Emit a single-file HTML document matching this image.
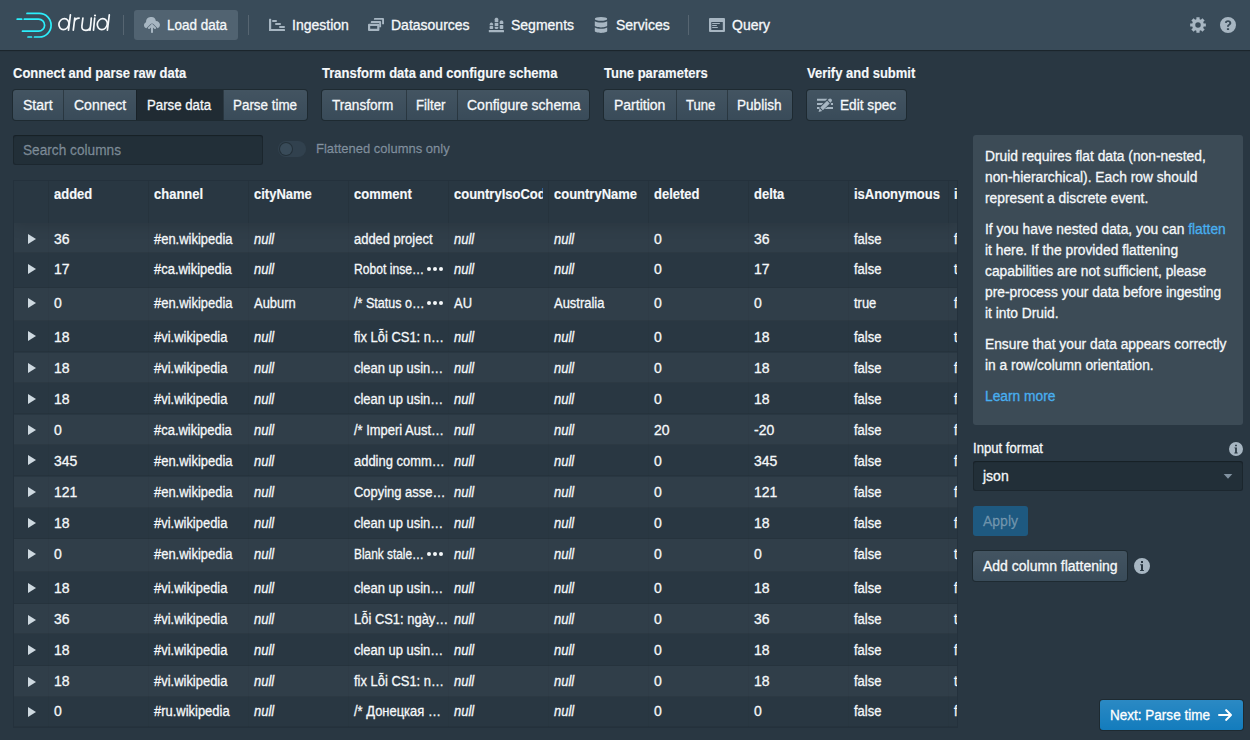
<!DOCTYPE html>
<html><head><meta charset="utf-8">
<style>
*{box-sizing:border-box;margin:0;padding:0}
html,body{width:1250px;height:740px;overflow:hidden}
body{background:#293742;font-family:"Liberation Sans",sans-serif;font-size:14px;line-height:18px;color:#f5f8fa;position:relative;-webkit-text-stroke:0.3px currentColor}
.abs{position:absolute}
.nav{position:absolute;left:0;top:0;width:1250px;height:50px;background:#394b59;box-shadow:0 0 0 1px rgba(16,22,26,.2),0 1px 1px rgba(16,22,26,.4);z-index:2}
.div{position:absolute;top:15px;width:1px;height:20px;background:rgba(255,255,255,.15)}
.ntxt{position:absolute;top:16px;white-space:nowrap}
.ico{position:absolute;top:17px;width:16px;height:16px}
.ico svg{display:block}
.title{position:absolute;top:64px;font-weight:bold;font-size:14px;white-space:nowrap;transform:scaleX(.928);transform-origin:0 0;-webkit-text-stroke:0.15px currentColor}
.bg{position:absolute;top:90px;height:30px;border-radius:3px;box-shadow:0 0 0 1px rgba(16,22,26,.4);overflow:hidden;background:#394b59;background-image:linear-gradient(to bottom,rgba(255,255,255,.05),rgba(255,255,255,0))}
.btn{position:absolute;top:0;height:30px}
.btn+.btn{border-left:1px solid rgba(16,22,26,.4)}
.btn.active{background:#202b33}
.btxt{position:absolute;top:96px;white-space:nowrap}
.search{position:absolute;left:13px;top:135px;width:250px;height:30px;border-radius:3px;background:rgba(16,22,26,.25);box-shadow:inset 0 0 0 1px rgba(16,22,26,.3),inset 0 1px 1px rgba(16,22,26,.4)}
.ph{position:absolute;left:23px;top:141px;color:rgba(167,182,194,.6)}
.table{position:absolute;left:13px;top:180px;width:945px;height:548px;border:1px solid rgba(16,22,26,.15);overflow:hidden}
.thead{position:absolute;left:0;top:0;width:100%;height:42px;background:#293742;box-shadow:0 2px 15px 0 rgba(0,0,0,.15);z-index:1}
.th{position:absolute;top:0;width:100px;height:42px;border-left:1px solid rgba(16,22,26,.12);padding:4px 5px;font-weight:bold;font-size:14px;overflow:hidden;white-space:nowrap;-webkit-text-stroke:0.15px currentColor}
.thc{width:89px;overflow:hidden}
.th span{display:inline-block;transform:scaleX(.928);transform-origin:0 0}
.th.exp{left:0;width:34px;border-left:none}
.tr{position:absolute;left:0;width:100%;box-shadow:inset 0 -1px 0 rgba(0,0,0,.07)}
.tr.odd{background:rgba(138,155,168,.08)}
.td{position:absolute;top:0;width:100px;border-left:1px solid rgba(16,22,26,.035);padding:6.7px 5px 0 5px;overflow:hidden;white-space:nowrap}
.td.exp{left:0;width:34px;border-left:none}
.nul{font-style:italic}
.s{display:inline-block;transform-origin:0 0}
.tri{position:absolute;left:14px;top:10.5px;width:0;height:0;border-left:8px solid #ced9e0;border-top:5px solid transparent;border-bottom:5px solid transparent}
.clip{display:inline-block;max-width:72px;overflow:hidden;vertical-align:top}
.more{position:absolute;left:77.5px;top:13.5px;width:18px;height:6px}
.more i{position:absolute;top:0;width:4.3px;height:4.3px;border-radius:50%;background:#f5f8fa}
.more i:nth-child(1){left:0}.more i:nth-child(2){left:6px}.more i:nth-child(3){left:12px}
.callout{position:absolute;left:973px;top:135px;width:270px;height:290px;border-radius:3px;background:rgba(138,155,168,.2)}
.ctxt{position:absolute;left:985px;margin-top:1px;line-height:21px;white-space:nowrap;transform:scaleX(.985);transform-origin:0 0}
a{color:#48aff0;text-decoration:none}
.label{position:absolute;left:973px;top:439px}
.select{position:absolute;left:973px;top:461px;width:270px;height:30px;border-radius:3px;background:rgba(16,22,26,.25);box-shadow:inset 0 0 0 1px rgba(16,22,26,.3),inset 0 1px 1px rgba(16,22,26,.4)}
.pbtn{position:absolute;border-radius:3px}
</style></head><body>
<div class="nav">
  <svg class="abs" style="left:0;top:0" width="120" height="50" viewBox="0 0 120 50">
    <g fill="none" stroke="#2ceefb" stroke-width="1.7" stroke-linecap="round">
      <path d="M27 13.4H39.3A11.8 11.8 0 0 1 39.3 37H34.5"/>
      <path d="M28 37H31.5"/>
      <path d="M24.3 19.2H38.6A6 6 0 0 1 38.6 31.2H22.5"/>
      <path d="M17.2 19.2H21.7"/>
    </g>
    <g fill="none" stroke="#f5f8fa" stroke-width="1.7" stroke-linecap="round" transform="translate(-0.5 -0.4)">
      <ellipse cx="64.4" cy="24.5" rx="5" ry="5.5" transform="translate(64.4 24.5) skewX(-5) translate(-64.4 -24.5)"/>
      <path d="M70.9 15.3L69 30.6"/>
      <path d="M75.3 18.4L73.8 30.6M74.9 22Q75.8 18.5 79.6 18.5"/>
      <path d="M83.4 18.4L82.4 26.3Q81.9 30.8 86.2 30.8Q90.6 30.8 91.1 26.3L91.8 18.4M91.2 25L90.5 30.6"/>
      <path d="M95.2 18.4L94 30.6"/>
      <ellipse cx="102.8" cy="24.5" rx="5" ry="5.5" transform="translate(102.8 24.5) skewX(-5) translate(-102.8 -24.5)"/>
      <path d="M109.8 15.3L107.9 30.6"/>
    </g>
    <circle cx="95" cy="15.5" r="1.1" fill="#f5f8fa"/>
  </svg>
  <div class="div" style="left:123px"></div>
  <div class="abs" style="left:134px;top:10px;width:104px;height:30px;border-radius:3px;background:rgba(138,155,168,.3)"></div>
  <div class="ico" style="left:144px"><svg width="16" height="16" viewBox="0 0 16 16" fill="#a7b6c2"><path d="M8.71 7.29C8.53 7.11 8.28 7 8 7s-.53.11-.71.29l-3 3a1.003 1.003 0 001.42 1.42L7 10.41V15c0 .55.45 1 1 1s1-.45 1-1v-4.59l1.29 1.29c.18.19.43.3.71.3a1.003 1.003 0 00.71-1.71l-3-3zM12 4c-.03 0-.07 0-.1.01A5 5 0 002 5c0 .11.01.22.02.34C.84 5.89 0 7.03 0 8.36 0 9.8.97 11 2.28 11.37c.03-.04.06-.08.1-.11l4.2-4.18c.35-.35.86-.57 1.42-.57s1.07.22 1.42.58l4.2 4.18.1.1A4.008 4.008 0 0016 8c0-2.21-1.79-4-4-4z"/></svg></div>
  <div class="ntxt" style="left:167px;transform:scaleX(0.963);transform-origin:0 0">Load data</div>
  <div class="div" style="left:248px"></div>
  <div class="ico" style="left:269px"><svg width="16" height="16" viewBox="0 0 16 16" fill="#a7b6c2"><rect x="0" y="1.8" width="2.2" height="12.2" rx=".6"/><rect x="0" y="12" width="16" height="2.1" rx=".6"/><rect x="3" y="3" width="5" height="2" rx="1"/><rect x="6" y="6" width="6" height="2" rx="1"/><rect x="10" y="9" width="6" height="2.1" rx="1"/></svg></div>
  <div class="ntxt" style="left:292px">Ingestion</div>
  <div class="ico" style="left:368px"><svg width="16" height="16" viewBox="0 0 16 16" fill="#a7b6c2"><path fill-rule="evenodd" d="M1 6.7h9.4a1 1 0 0 1 1 1V13a1 1 0 0 1-1 1H1a1 1 0 0 1-1-1V7.7a1 1 0 0 1 1-1zM2.2 9v2.8h7V9z"/><path d="M3.8 4h8.3a1 1 0 0 1 1 1v5.2h-1.9V5.9H2.8V5a1 1 0 0 1 1-1z"/><path d="M6.8 0.9h8.2a1 1 0 0 1 1 1v5.3h-1.9V2.8H5.9V1.9a1 1 0 0 1 .9-1z"/></svg></div>
  <div class="ntxt" style="left:391px">Datasources</div>
  <div class="ico" style="left:488px"><svg width="16" height="16" viewBox="0 0 16 16" fill="#a7b6c2"><rect x="0.8" y="13" width="15.2" height="2.2" rx=".5"/><path d="M1.6 8C1.6 6.5 2.4 5.4 3.4 5.4S5.2 6.5 5.2 8V8.3H1.6z"/><rect x="1.6" y="9" width="3.6" height="3" rx=".8"/><path d="M6.7 5.1V2.3C6.7 1.4 7.5 .7 8.5 .7s1.8.7 1.8 1.6v2.8z"/><rect x="6.7" y="5.8" width="3.6" height="3.4"/><path d="M6.7 9.9h3.6v.8c0 .9-.8 1.3-1.8 1.3s-1.8-.4-1.8-1.3z"/><path d="M11.7 7.1V5.2c0-.9.8-1.6 1.8-1.6s1.8.7 1.8 1.6v1.9z"/><rect x="11.7" y="7.9" width="3.6" height="4.1" rx=".8"/></svg></div>
  <div class="ntxt" style="left:511px">Segments</div>
  <div class="ico" style="left:593px"><svg width="16" height="16" viewBox="0 0 16 16" fill="#a7b6c2"><ellipse cx="8" cy="1.9" rx="6.2" ry="1.9"/><path d="M1.8 4.3c1.2.8 3.6 1.3 6.2 1.3s5-.5 6.2-1.3v4.3c0 1.1-2.8 1.9-6.2 1.9S1.8 9.7 1.8 8.6z"/><path d="M1.8 10.5c1.2.8 3.6 1.3 6.2 1.3s5-.5 6.2-1.3v3.6c0 1.1-2.8 1.9-6.2 1.9S1.8 15.2 1.8 14.1z"/></svg></div>
  <div class="ntxt" style="left:616px">Services</div>
  <div class="div" style="left:688px"></div>
  <div class="ico" style="left:709px"><svg width="16" height="16" viewBox="0 0 16 16" fill="#a7b6c2"><path fill-rule="evenodd" d="M1 1h14a1 1 0 0 1 1 1v12a1 1 0 0 1-1 1H1a1 1 0 0 1-1-1V2a1 1 0 0 1 1-1zM2.3 5.1v7.8h11.5V5.1z"/><rect x="3" y="6" width="8" height="1" rx=".4"/><rect x="3" y="8" width="5" height="1" rx=".4"/><rect x="3" y="10" width="6" height="1" rx=".4"/></svg></div>
  <div class="ntxt" style="left:732px">Query</div>
  <div class="ico" style="left:1190px"><svg width="16" height="16" viewBox="0 0 16 16" fill="#a7b6c2"><path fill-rule="evenodd" d="M6.40 2.32L6.40 0.16L9.60 0.16L9.60 2.32A5.9 5.9 0 0 1 10.88 2.85L12.41 1.33L14.67 3.59L13.15 5.12A5.9 5.9 0 0 1 13.68 6.40L15.84 6.40L15.84 9.60L13.68 9.60A5.9 5.9 0 0 1 13.15 10.88L14.67 12.41L12.41 14.67L10.88 13.15A5.9 5.9 0 0 1 9.60 13.68L9.60 15.84L6.40 15.84L6.40 13.68A5.9 5.9 0 0 1 5.12 13.15L3.59 14.67L1.33 12.41L2.85 10.88A5.9 5.9 0 0 1 2.32 9.60L0.16 9.60L0.16 6.40L2.32 6.40A5.9 5.9 0 0 1 2.85 5.12L1.33 3.59L3.59 1.33L5.12 2.85A5.9 5.9 0 0 1 6.40 2.32ZM8 5.25A2.75 2.75 0 1 0 8 10.75A2.75 2.75 0 1 0 8 5.25Z"/></svg></div>
  <div class="ico" style="left:1220px"><svg width="16" height="16" viewBox="0 0 16 16" fill="#a7b6c2"><path fill-rule="evenodd" d="M8 0a8 8 0 1 1 0 16A8 8 0 0 1 8 0zM6.9 11.2v1.7h2.2v-1.7zM8 3.2c-1.9 0-3.1 1.2-3.1 2.6l1.8.3c.1-.8.6-1.2 1.3-1.2.8 0 1.3.5 1.3 1.1 0 .5-.3.8-.9 1.3-.8.6-1.4 1.1-1.4 2.2v.3h2v-.2c0-.6.3-.9.9-1.3.8-.6 1.4-1.1 1.4-2.3 0-1.6-1.3-2.8-3.3-2.8z"/></svg></div>
</div>

<div class="title" style="left:13px">Connect and parse raw data</div>
<div class="title" style="left:322px">Transform data and configure schema</div>
<div class="title" style="left:604px">Tune parameters</div>
<div class="title" style="left:807px">Verify and submit</div>

<div class="bg" style="left:13px;width:294px">
  <div class="btn" style="left:0;width:50px"></div>
  <div class="btn" style="left:50px;width:73px"></div>
  <div class="btn active" style="left:123px;width:87px"></div>
  <div class="btn" style="left:210px;width:84px"></div>
</div>
<div class="btxt" style="left:23px">Start</div>
<div class="btxt" style="left:74px">Connect</div>
<div class="btxt" style="left:147px;transform:scaleX(0.945);transform-origin:0 0">Parse data</div>
<div class="btxt" style="left:233px;transform:scaleX(0.957);transform-origin:0 0">Parse time</div>

<div class="bg" style="left:322px;width:267px">
  <div class="btn" style="left:0;width:84px"></div>
  <div class="btn" style="left:84px;width:51px"></div>
  <div class="btn" style="left:135px;width:132px"></div>
</div>
<div class="btxt" style="left:332px;transform:scaleX(0.97);transform-origin:0 0">Transform</div>
<div class="btxt" style="left:416px;transform:scaleX(0.945);transform-origin:0 0">Filter</div>
<div class="btxt" style="left:467px">Configure schema</div>

<div class="bg" style="left:604px;width:188px">
  <div class="btn" style="left:0;width:72px"></div>
  <div class="btn" style="left:72px;width:51px"></div>
  <div class="btn" style="left:123px;width:65px"></div>
</div>
<div class="btxt" style="left:614px">Partition</div>
<div class="btxt" style="left:686px;transform:scaleX(0.936);transform-origin:0 0">Tune</div>
<div class="btxt" style="left:737px;transform:scaleX(0.97);transform-origin:0 0">Publish</div>

<div class="bg" style="left:807px;width:99px"></div>
<div class="ico" style="left:817px;top:97px"><svg width="16" height="16" viewBox="0 0 16 16" fill="#a7b6c2"><path d="M0 1.8h10.3l-1.9 2H0zM0 5.9h6.3l-1.9 2H0zM13.9 5.9H16v2h-2.1zM0 10h2.5v2H0zM10.5 10H16v2H7.5z"/><path d="M3.3 10.6l6.8-6.8 2.6 2.6-6.8 6.8zM2.6 11.3l2.6 2.6L1.6 15zM10.8 3.1l1-1a1.8 1.8 0 0 1 2.6 2.6l-1 1z"/></svg></div>
<div class="btxt" style="left:840px;transform:scaleX(0.975);transform-origin:0 0">Edit spec</div>

<div class="search"></div>
<div class="ph" style="transform:scaleX(0.976);transform-origin:0 0">Search columns</div>
<div class="abs" style="left:278px;top:141px;width:28px;height:16px;border-radius:8px;background:rgba(57,75,89,.5)"></div>
<div class="abs" style="left:280px;top:143px;width:12px;height:12px;border-radius:50%;background:#394b59;box-shadow:0 0 0 1px rgba(16,22,26,.4)"></div>
<div class="abs" style="left:316px;top:140px;font-size:13px;color:rgba(167,182,194,.6)">Flattened columns only</div>

<div class="table">
<div class="thead">
<div class="th exp"></div>
<div class="th" style="left:34px"><div class="thc"><span>added</span></div></div>
<div class="th" style="left:134px"><div class="thc"><span>channel</span></div></div>
<div class="th" style="left:234px"><div class="thc"><span>cityName</span></div></div>
<div class="th" style="left:334px"><div class="thc"><span>comment</span></div></div>
<div class="th" style="left:434px"><div class="thc"><span>countryIsoCode</span></div></div>
<div class="th" style="left:534px"><div class="thc"><span>countryName</span></div></div>
<div class="th" style="left:634px"><div class="thc"><span>deleted</span></div></div>
<div class="th" style="left:734px"><div class="thc"><span>delta</span></div></div>
<div class="th" style="left:834px"><div class="thc"><span>isAnonymous</span></div></div>
<div class="th" style="left:934px"><div class="thc"><span>isMinor</span></div></div>
</div>
<div class="tr odd" style="top:42px;height:30px">
<div class="td exp" style="height:30px"><span class="tri"></span></div>
<div class="td" style="left:34px;height:30px"><span class="s" style="transform:scaleX(1.0);position:relative;top:0px">36</span></div>
<div class="td" style="left:134px;height:30px"><span class="s" style="transform:scaleX(0.925);position:relative;top:0px">#en.wikipedia</span></div>
<div class="td nul" style="left:234px;height:30px"><span class="s" style="transform:scaleX(0.925);position:relative;top:0px">null</span></div>
<div class="td" style="left:334px;height:30px"><span class="s" style="transform:scaleX(0.925);position:relative;top:0px">added project</span></div>
<div class="td nul" style="left:434px;height:30px"><span class="s" style="transform:scaleX(0.925);position:relative;top:0px">null</span></div>
<div class="td nul" style="left:534px;height:30px"><span class="s" style="transform:scaleX(0.925);position:relative;top:0px">null</span></div>
<div class="td" style="left:634px;height:30px"><span class="s" style="transform:scaleX(1.0);position:relative;top:0px">0</span></div>
<div class="td" style="left:734px;height:30px"><span class="s" style="transform:scaleX(1.0);position:relative;top:0px">36</span></div>
<div class="td" style="left:834px;height:30px"><span class="s" style="transform:scaleX(0.925);position:relative;top:0px">false</span></div>
<div class="td" style="left:934px;height:30px"><span class="s" style="transform:scaleX(0.925);position:relative;top:0px">f</span></div>
</div>
<div class="tr even" style="top:72px;height:34.5px">
<div class="td exp" style="height:34.5px"><span class="tri"></span></div>
<div class="td" style="left:34px;height:34.5px"><span class="s" style="transform:scaleX(1.0);position:relative;top:0px">17</span></div>
<div class="td" style="left:134px;height:34.5px"><span class="s" style="transform:scaleX(0.925);position:relative;top:0px">#ca.wikipedia</span></div>
<div class="td nul" style="left:234px;height:34.5px"><span class="s" style="transform:scaleX(0.925);position:relative;top:0px">null</span></div>
<div class="td" style="left:334px;height:34.5px"><span class="s" style="transform:scaleX(0.867);position:relative;top:0px">Robot inse…</span><span class="more"><i></i><i></i><i></i></span></div>
<div class="td nul" style="left:434px;height:34.5px"><span class="s" style="transform:scaleX(0.925);position:relative;top:0px">null</span></div>
<div class="td nul" style="left:534px;height:34.5px"><span class="s" style="transform:scaleX(0.925);position:relative;top:0px">null</span></div>
<div class="td" style="left:634px;height:34.5px"><span class="s" style="transform:scaleX(1.0);position:relative;top:0px">0</span></div>
<div class="td" style="left:734px;height:34.5px"><span class="s" style="transform:scaleX(1.0);position:relative;top:0px">17</span></div>
<div class="td" style="left:834px;height:34.5px"><span class="s" style="transform:scaleX(0.925);position:relative;top:0px">false</span></div>
<div class="td" style="left:934px;height:34.5px"><span class="s" style="transform:scaleX(0.925);position:relative;top:0px">t</span></div>
</div>
<div class="tr odd" style="top:106.5px;height:33.10000000000002px">
<div class="td exp" style="height:33.10000000000002px"><span class="tri"></span></div>
<div class="td" style="left:34px;height:33.10000000000002px"><span class="s" style="transform:scaleX(1.0);position:relative;top:0px">0</span></div>
<div class="td" style="left:134px;height:33.10000000000002px"><span class="s" style="transform:scaleX(0.925);position:relative;top:0px">#en.wikipedia</span></div>
<div class="td" style="left:234px;height:33.10000000000002px"><span class="s" style="transform:scaleX(0.925);position:relative;top:0px">Auburn</span></div>
<div class="td" style="left:334px;height:33.10000000000002px"><span class="s" style="transform:scaleX(0.898);position:relative;top:0px">/* Status o…</span><span class="more"><i></i><i></i><i></i></span></div>
<div class="td" style="left:434px;height:33.10000000000002px"><span class="s" style="transform:scaleX(0.925);position:relative;top:0px">AU</span></div>
<div class="td" style="left:534px;height:33.10000000000002px"><span class="s" style="transform:scaleX(0.925);position:relative;top:0px">Australia</span></div>
<div class="td" style="left:634px;height:33.10000000000002px"><span class="s" style="transform:scaleX(1.0);position:relative;top:0px">0</span></div>
<div class="td" style="left:734px;height:33.10000000000002px"><span class="s" style="transform:scaleX(1.0);position:relative;top:0px">0</span></div>
<div class="td" style="left:834px;height:33.10000000000002px"><span class="s" style="transform:scaleX(0.925);position:relative;top:0px">true</span></div>
<div class="td" style="left:934px;height:33.10000000000002px"><span class="s" style="transform:scaleX(0.925);position:relative;top:0px">f</span></div>
</div>
<div class="tr even" style="top:139.60000000000002px;height:31.899999999999977px">
<div class="td exp" style="height:31.899999999999977px"><span class="tri"></span></div>
<div class="td" style="left:34px;height:31.899999999999977px"><span class="s" style="transform:scaleX(1.0);position:relative;top:1px">18</span></div>
<div class="td" style="left:134px;height:31.899999999999977px"><span class="s" style="transform:scaleX(0.925);position:relative;top:1px">#vi.wikipedia</span></div>
<div class="td nul" style="left:234px;height:31.899999999999977px"><span class="s" style="transform:scaleX(0.925);position:relative;top:1px">null</span></div>
<div class="td" style="left:334px;height:31.899999999999977px"><span class="s" style="transform:scaleX(0.925);position:relative;top:1px">fix Lỗi CS1: n…</span></div>
<div class="td nul" style="left:434px;height:31.899999999999977px"><span class="s" style="transform:scaleX(0.925);position:relative;top:1px">null</span></div>
<div class="td nul" style="left:534px;height:31.899999999999977px"><span class="s" style="transform:scaleX(0.925);position:relative;top:1px">null</span></div>
<div class="td" style="left:634px;height:31.899999999999977px"><span class="s" style="transform:scaleX(1.0);position:relative;top:1px">0</span></div>
<div class="td" style="left:734px;height:31.899999999999977px"><span class="s" style="transform:scaleX(1.0);position:relative;top:1px">18</span></div>
<div class="td" style="left:834px;height:31.899999999999977px"><span class="s" style="transform:scaleX(0.925);position:relative;top:1px">false</span></div>
<div class="td" style="left:934px;height:31.899999999999977px"><span class="s" style="transform:scaleX(0.925);position:relative;top:1px">t</span></div>
</div>
<div class="tr odd" style="top:171.5px;height:30.600000000000023px">
<div class="td exp" style="height:30.600000000000023px"><span class="tri"></span></div>
<div class="td" style="left:34px;height:30.600000000000023px"><span class="s" style="transform:scaleX(1.0);position:relative;top:0px">18</span></div>
<div class="td" style="left:134px;height:30.600000000000023px"><span class="s" style="transform:scaleX(0.925);position:relative;top:0px">#vi.wikipedia</span></div>
<div class="td nul" style="left:234px;height:30.600000000000023px"><span class="s" style="transform:scaleX(0.925);position:relative;top:0px">null</span></div>
<div class="td" style="left:334px;height:30.600000000000023px"><span class="s" style="transform:scaleX(0.925);position:relative;top:0px">clean up usin…</span></div>
<div class="td nul" style="left:434px;height:30.600000000000023px"><span class="s" style="transform:scaleX(0.925);position:relative;top:0px">null</span></div>
<div class="td nul" style="left:534px;height:30.600000000000023px"><span class="s" style="transform:scaleX(0.925);position:relative;top:0px">null</span></div>
<div class="td" style="left:634px;height:30.600000000000023px"><span class="s" style="transform:scaleX(1.0);position:relative;top:0px">0</span></div>
<div class="td" style="left:734px;height:30.600000000000023px"><span class="s" style="transform:scaleX(1.0);position:relative;top:0px">18</span></div>
<div class="td" style="left:834px;height:30.600000000000023px"><span class="s" style="transform:scaleX(0.925);position:relative;top:0px">false</span></div>
<div class="td" style="left:934px;height:30.600000000000023px"><span class="s" style="transform:scaleX(0.925);position:relative;top:0px">f</span></div>
</div>
<div class="tr even" style="top:202.10000000000002px;height:31.399999999999977px">
<div class="td exp" style="height:31.399999999999977px"><span class="tri"></span></div>
<div class="td" style="left:34px;height:31.399999999999977px"><span class="s" style="transform:scaleX(1.0);position:relative;top:0px">18</span></div>
<div class="td" style="left:134px;height:31.399999999999977px"><span class="s" style="transform:scaleX(0.925);position:relative;top:0px">#vi.wikipedia</span></div>
<div class="td nul" style="left:234px;height:31.399999999999977px"><span class="s" style="transform:scaleX(0.925);position:relative;top:0px">null</span></div>
<div class="td" style="left:334px;height:31.399999999999977px"><span class="s" style="transform:scaleX(0.925);position:relative;top:0px">clean up usin…</span></div>
<div class="td nul" style="left:434px;height:31.399999999999977px"><span class="s" style="transform:scaleX(0.925);position:relative;top:0px">null</span></div>
<div class="td nul" style="left:534px;height:31.399999999999977px"><span class="s" style="transform:scaleX(0.925);position:relative;top:0px">null</span></div>
<div class="td" style="left:634px;height:31.399999999999977px"><span class="s" style="transform:scaleX(1.0);position:relative;top:0px">0</span></div>
<div class="td" style="left:734px;height:31.399999999999977px"><span class="s" style="transform:scaleX(1.0);position:relative;top:0px">18</span></div>
<div class="td" style="left:834px;height:31.399999999999977px"><span class="s" style="transform:scaleX(0.925);position:relative;top:0px">false</span></div>
<div class="td" style="left:934px;height:31.399999999999977px"><span class="s" style="transform:scaleX(0.925);position:relative;top:0px">f</span></div>
</div>
<div class="tr odd" style="top:233.5px;height:30.19999999999999px">
<div class="td exp" style="height:30.19999999999999px"><span class="tri"></span></div>
<div class="td" style="left:34px;height:30.19999999999999px"><span class="s" style="transform:scaleX(1.0);position:relative;top:0px">0</span></div>
<div class="td" style="left:134px;height:30.19999999999999px"><span class="s" style="transform:scaleX(0.925);position:relative;top:0px">#ca.wikipedia</span></div>
<div class="td nul" style="left:234px;height:30.19999999999999px"><span class="s" style="transform:scaleX(0.925);position:relative;top:0px">null</span></div>
<div class="td" style="left:334px;height:30.19999999999999px"><span class="s" style="transform:scaleX(0.925);position:relative;top:0px">/* Imperi Aust…</span></div>
<div class="td nul" style="left:434px;height:30.19999999999999px"><span class="s" style="transform:scaleX(0.925);position:relative;top:0px">null</span></div>
<div class="td nul" style="left:534px;height:30.19999999999999px"><span class="s" style="transform:scaleX(0.925);position:relative;top:0px">null</span></div>
<div class="td" style="left:634px;height:30.19999999999999px"><span class="s" style="transform:scaleX(1.0);position:relative;top:0px">20</span></div>
<div class="td" style="left:734px;height:30.19999999999999px"><span class="s" style="transform:scaleX(1.0);position:relative;top:0px">-20</span></div>
<div class="td" style="left:834px;height:30.19999999999999px"><span class="s" style="transform:scaleX(0.925);position:relative;top:0px">false</span></div>
<div class="td" style="left:934px;height:30.19999999999999px"><span class="s" style="transform:scaleX(0.925);position:relative;top:0px">f</span></div>
</div>
<div class="tr even" style="top:263.7px;height:31.80000000000001px">
<div class="td exp" style="height:31.80000000000001px"><span class="tri"></span></div>
<div class="td" style="left:34px;height:31.80000000000001px"><span class="s" style="transform:scaleX(1.0);position:relative;top:1px">345</span></div>
<div class="td" style="left:134px;height:31.80000000000001px"><span class="s" style="transform:scaleX(0.925);position:relative;top:1px">#en.wikipedia</span></div>
<div class="td nul" style="left:234px;height:31.80000000000001px"><span class="s" style="transform:scaleX(0.925);position:relative;top:1px">null</span></div>
<div class="td" style="left:334px;height:31.80000000000001px"><span class="s" style="transform:scaleX(0.925);position:relative;top:1px">adding comm…</span></div>
<div class="td nul" style="left:434px;height:31.80000000000001px"><span class="s" style="transform:scaleX(0.925);position:relative;top:1px">null</span></div>
<div class="td nul" style="left:534px;height:31.80000000000001px"><span class="s" style="transform:scaleX(0.925);position:relative;top:1px">null</span></div>
<div class="td" style="left:634px;height:31.80000000000001px"><span class="s" style="transform:scaleX(1.0);position:relative;top:1px">0</span></div>
<div class="td" style="left:734px;height:31.80000000000001px"><span class="s" style="transform:scaleX(1.0);position:relative;top:1px">345</span></div>
<div class="td" style="left:834px;height:31.80000000000001px"><span class="s" style="transform:scaleX(0.925);position:relative;top:1px">false</span></div>
<div class="td" style="left:934px;height:31.80000000000001px"><span class="s" style="transform:scaleX(0.925);position:relative;top:1px">f</span></div>
</div>
<div class="tr odd" style="top:295.5px;height:31.0px">
<div class="td exp" style="height:31.0px"><span class="tri"></span></div>
<div class="td" style="left:34px;height:31.0px"><span class="s" style="transform:scaleX(1.0);position:relative;top:0px">121</span></div>
<div class="td" style="left:134px;height:31.0px"><span class="s" style="transform:scaleX(0.925);position:relative;top:0px">#en.wikipedia</span></div>
<div class="td nul" style="left:234px;height:31.0px"><span class="s" style="transform:scaleX(0.925);position:relative;top:0px">null</span></div>
<div class="td" style="left:334px;height:31.0px"><span class="s" style="transform:scaleX(0.925);position:relative;top:0px">Copying asse…</span></div>
<div class="td nul" style="left:434px;height:31.0px"><span class="s" style="transform:scaleX(0.925);position:relative;top:0px">null</span></div>
<div class="td nul" style="left:534px;height:31.0px"><span class="s" style="transform:scaleX(0.925);position:relative;top:0px">null</span></div>
<div class="td" style="left:634px;height:31.0px"><span class="s" style="transform:scaleX(1.0);position:relative;top:0px">0</span></div>
<div class="td" style="left:734px;height:31.0px"><span class="s" style="transform:scaleX(1.0);position:relative;top:0px">121</span></div>
<div class="td" style="left:834px;height:31.0px"><span class="s" style="transform:scaleX(0.925);position:relative;top:0px">false</span></div>
<div class="td" style="left:934px;height:31.0px"><span class="s" style="transform:scaleX(0.925);position:relative;top:0px">f</span></div>
</div>
<div class="tr even" style="top:326.5px;height:31.200000000000045px">
<div class="td exp" style="height:31.200000000000045px"><span class="tri"></span></div>
<div class="td" style="left:34px;height:31.200000000000045px"><span class="s" style="transform:scaleX(1.0);position:relative;top:0px">18</span></div>
<div class="td" style="left:134px;height:31.200000000000045px"><span class="s" style="transform:scaleX(0.925);position:relative;top:0px">#vi.wikipedia</span></div>
<div class="td nul" style="left:234px;height:31.200000000000045px"><span class="s" style="transform:scaleX(0.925);position:relative;top:0px">null</span></div>
<div class="td" style="left:334px;height:31.200000000000045px"><span class="s" style="transform:scaleX(0.925);position:relative;top:0px">clean up usin…</span></div>
<div class="td nul" style="left:434px;height:31.200000000000045px"><span class="s" style="transform:scaleX(0.925);position:relative;top:0px">null</span></div>
<div class="td nul" style="left:534px;height:31.200000000000045px"><span class="s" style="transform:scaleX(0.925);position:relative;top:0px">null</span></div>
<div class="td" style="left:634px;height:31.200000000000045px"><span class="s" style="transform:scaleX(1.0);position:relative;top:0px">0</span></div>
<div class="td" style="left:734px;height:31.200000000000045px"><span class="s" style="transform:scaleX(1.0);position:relative;top:0px">18</span></div>
<div class="td" style="left:834px;height:31.200000000000045px"><span class="s" style="transform:scaleX(0.925);position:relative;top:0px">false</span></div>
<div class="td" style="left:934px;height:31.200000000000045px"><span class="s" style="transform:scaleX(0.925);position:relative;top:0px">f</span></div>
</div>
<div class="tr odd" style="top:357.70000000000005px;height:33.299999999999955px">
<div class="td exp" style="height:33.299999999999955px"><span class="tri"></span></div>
<div class="td" style="left:34px;height:33.299999999999955px"><span class="s" style="transform:scaleX(1.0);position:relative;top:0px">0</span></div>
<div class="td" style="left:134px;height:33.299999999999955px"><span class="s" style="transform:scaleX(0.925);position:relative;top:0px">#en.wikipedia</span></div>
<div class="td nul" style="left:234px;height:33.299999999999955px"><span class="s" style="transform:scaleX(0.925);position:relative;top:0px">null</span></div>
<div class="td" style="left:334px;height:33.299999999999955px"><span class="s" style="transform:scaleX(0.848);position:relative;top:0px">Blank stale…</span><span class="more"><i></i><i></i><i></i></span></div>
<div class="td nul" style="left:434px;height:33.299999999999955px"><span class="s" style="transform:scaleX(0.925);position:relative;top:0px">null</span></div>
<div class="td nul" style="left:534px;height:33.299999999999955px"><span class="s" style="transform:scaleX(0.925);position:relative;top:0px">null</span></div>
<div class="td" style="left:634px;height:33.299999999999955px"><span class="s" style="transform:scaleX(1.0);position:relative;top:0px">0</span></div>
<div class="td" style="left:734px;height:33.299999999999955px"><span class="s" style="transform:scaleX(1.0);position:relative;top:0px">0</span></div>
<div class="td" style="left:834px;height:33.299999999999955px"><span class="s" style="transform:scaleX(0.925);position:relative;top:0px">false</span></div>
<div class="td" style="left:934px;height:33.299999999999955px"><span class="s" style="transform:scaleX(0.925);position:relative;top:0px">t</span></div>
</div>
<div class="tr even" style="top:391px;height:32px">
<div class="td exp" style="height:32px"><span class="tri"></span></div>
<div class="td" style="left:34px;height:32px"><span class="s" style="transform:scaleX(1.0);position:relative;top:0px">18</span></div>
<div class="td" style="left:134px;height:32px"><span class="s" style="transform:scaleX(0.925);position:relative;top:0px">#vi.wikipedia</span></div>
<div class="td nul" style="left:234px;height:32px"><span class="s" style="transform:scaleX(0.925);position:relative;top:0px">null</span></div>
<div class="td" style="left:334px;height:32px"><span class="s" style="transform:scaleX(0.925);position:relative;top:0px">clean up usin…</span></div>
<div class="td nul" style="left:434px;height:32px"><span class="s" style="transform:scaleX(0.925);position:relative;top:0px">null</span></div>
<div class="td nul" style="left:534px;height:32px"><span class="s" style="transform:scaleX(0.925);position:relative;top:0px">null</span></div>
<div class="td" style="left:634px;height:32px"><span class="s" style="transform:scaleX(1.0);position:relative;top:0px">0</span></div>
<div class="td" style="left:734px;height:32px"><span class="s" style="transform:scaleX(1.0);position:relative;top:0px">18</span></div>
<div class="td" style="left:834px;height:32px"><span class="s" style="transform:scaleX(0.925);position:relative;top:0px">false</span></div>
<div class="td" style="left:934px;height:32px"><span class="s" style="transform:scaleX(0.925);position:relative;top:0px">f</span></div>
</div>
<div class="tr odd" style="top:423px;height:30.399999999999977px">
<div class="td exp" style="height:30.399999999999977px"><span class="tri"></span></div>
<div class="td" style="left:34px;height:30.399999999999977px"><span class="s" style="transform:scaleX(1.0);position:relative;top:-1px">36</span></div>
<div class="td" style="left:134px;height:30.399999999999977px"><span class="s" style="transform:scaleX(0.925);position:relative;top:-1px">#vi.wikipedia</span></div>
<div class="td nul" style="left:234px;height:30.399999999999977px"><span class="s" style="transform:scaleX(0.925);position:relative;top:-1px">null</span></div>
<div class="td" style="left:334px;height:30.399999999999977px"><span class="s" style="transform:scaleX(0.925);position:relative;top:-1px">Lỗi CS1: ngày…</span></div>
<div class="td nul" style="left:434px;height:30.399999999999977px"><span class="s" style="transform:scaleX(0.925);position:relative;top:-1px">null</span></div>
<div class="td nul" style="left:534px;height:30.399999999999977px"><span class="s" style="transform:scaleX(0.925);position:relative;top:-1px">null</span></div>
<div class="td" style="left:634px;height:30.399999999999977px"><span class="s" style="transform:scaleX(1.0);position:relative;top:-1px">0</span></div>
<div class="td" style="left:734px;height:30.399999999999977px"><span class="s" style="transform:scaleX(1.0);position:relative;top:-1px">36</span></div>
<div class="td" style="left:834px;height:30.399999999999977px"><span class="s" style="transform:scaleX(0.925);position:relative;top:-1px">false</span></div>
<div class="td" style="left:934px;height:30.399999999999977px"><span class="s" style="transform:scaleX(0.925);position:relative;top:-1px">t</span></div>
</div>
<div class="tr even" style="top:453.4px;height:31.800000000000068px">
<div class="td exp" style="height:31.800000000000068px"><span class="tri"></span></div>
<div class="td" style="left:34px;height:31.800000000000068px"><span class="s" style="transform:scaleX(1.0);position:relative;top:0px">18</span></div>
<div class="td" style="left:134px;height:31.800000000000068px"><span class="s" style="transform:scaleX(0.925);position:relative;top:0px">#vi.wikipedia</span></div>
<div class="td nul" style="left:234px;height:31.800000000000068px"><span class="s" style="transform:scaleX(0.925);position:relative;top:0px">null</span></div>
<div class="td" style="left:334px;height:31.800000000000068px"><span class="s" style="transform:scaleX(0.925);position:relative;top:0px">clean up usin…</span></div>
<div class="td nul" style="left:434px;height:31.800000000000068px"><span class="s" style="transform:scaleX(0.925);position:relative;top:0px">null</span></div>
<div class="td nul" style="left:534px;height:31.800000000000068px"><span class="s" style="transform:scaleX(0.925);position:relative;top:0px">null</span></div>
<div class="td" style="left:634px;height:31.800000000000068px"><span class="s" style="transform:scaleX(1.0);position:relative;top:0px">0</span></div>
<div class="td" style="left:734px;height:31.800000000000068px"><span class="s" style="transform:scaleX(1.0);position:relative;top:0px">18</span></div>
<div class="td" style="left:834px;height:31.800000000000068px"><span class="s" style="transform:scaleX(0.925);position:relative;top:0px">false</span></div>
<div class="td" style="left:934px;height:31.800000000000068px"><span class="s" style="transform:scaleX(0.925);position:relative;top:0px">f</span></div>
</div>
<div class="tr odd" style="top:485.20000000000005px;height:30.399999999999977px">
<div class="td exp" style="height:30.399999999999977px"><span class="tri"></span></div>
<div class="td" style="left:34px;height:30.399999999999977px"><span class="s" style="transform:scaleX(1.0);position:relative;top:-1px">18</span></div>
<div class="td" style="left:134px;height:30.399999999999977px"><span class="s" style="transform:scaleX(0.925);position:relative;top:-1px">#vi.wikipedia</span></div>
<div class="td nul" style="left:234px;height:30.399999999999977px"><span class="s" style="transform:scaleX(0.925);position:relative;top:-1px">null</span></div>
<div class="td" style="left:334px;height:30.399999999999977px"><span class="s" style="transform:scaleX(0.925);position:relative;top:-1px">fix Lỗi CS1: n…</span></div>
<div class="td nul" style="left:434px;height:30.399999999999977px"><span class="s" style="transform:scaleX(0.925);position:relative;top:-1px">null</span></div>
<div class="td nul" style="left:534px;height:30.399999999999977px"><span class="s" style="transform:scaleX(0.925);position:relative;top:-1px">null</span></div>
<div class="td" style="left:634px;height:30.399999999999977px"><span class="s" style="transform:scaleX(1.0);position:relative;top:-1px">0</span></div>
<div class="td" style="left:734px;height:30.399999999999977px"><span class="s" style="transform:scaleX(1.0);position:relative;top:-1px">18</span></div>
<div class="td" style="left:834px;height:30.399999999999977px"><span class="s" style="transform:scaleX(0.925);position:relative;top:-1px">false</span></div>
<div class="td" style="left:934px;height:30.399999999999977px"><span class="s" style="transform:scaleX(0.925);position:relative;top:-1px">t</span></div>
</div>
<div class="tr even" style="top:515.6px;height:30.399999999999977px">
<div class="td exp" style="height:30.399999999999977px"><span class="tri"></span></div>
<div class="td" style="left:34px;height:30.399999999999977px"><span class="s" style="transform:scaleX(1.0);position:relative;top:-1px">0</span></div>
<div class="td" style="left:134px;height:30.399999999999977px"><span class="s" style="transform:scaleX(0.925);position:relative;top:-1px">#ru.wikipedia</span></div>
<div class="td nul" style="left:234px;height:30.399999999999977px"><span class="s" style="transform:scaleX(0.925);position:relative;top:-1px">null</span></div>
<div class="td" style="left:334px;height:30.399999999999977px"><span class="s" style="transform:scaleX(0.925);position:relative;top:-1px">/* Донецкая …</span></div>
<div class="td nul" style="left:434px;height:30.399999999999977px"><span class="s" style="transform:scaleX(0.925);position:relative;top:-1px">null</span></div>
<div class="td nul" style="left:534px;height:30.399999999999977px"><span class="s" style="transform:scaleX(0.925);position:relative;top:-1px">null</span></div>
<div class="td" style="left:634px;height:30.399999999999977px"><span class="s" style="transform:scaleX(1.0);position:relative;top:-1px">0</span></div>
<div class="td" style="left:734px;height:30.399999999999977px"><span class="s" style="transform:scaleX(1.0);position:relative;top:-1px">0</span></div>
<div class="td" style="left:834px;height:30.399999999999977px"><span class="s" style="transform:scaleX(0.925);position:relative;top:-1px">false</span></div>
<div class="td" style="left:934px;height:30.399999999999977px"><span class="s" style="transform:scaleX(0.925);position:relative;top:-1px">f</span></div>
</div>
</div>

<div class="callout"></div>
<div class="ctxt" style="top:145px">Druid requires flat data (non-nested,</div>
<div class="ctxt" style="top:166px">non-hierarchical). Each row should</div>
<div class="ctxt" style="top:187px">represent a discrete event.</div>
<div class="ctxt" style="top:218px">If you have nested data, you can <a>flatten</a></div>
<div class="ctxt" style="top:239px">it here. If the provided flattening</div>
<div class="ctxt" style="top:260px">capabilities are not sufficient, please</div>
<div class="ctxt" style="top:281px">pre-process your data before ingesting</div>
<div class="ctxt" style="top:302px">it into Druid.</div>
<div class="ctxt" style="top:333px">Ensure that your data appears correctly</div>
<div class="ctxt" style="top:354px">in a row/column orientation.</div>
<div class="ctxt" style="top:385px"><a>Learn more</a></div>

<div class="label" style="transform:scaleX(0.937);transform-origin:0 0">Input format</div>
<div class="ico" style="left:1229px;top:442px;transform:scale(.875);transform-origin:0 0"><svg width="16" height="16" viewBox="0 0 16 16" fill="#a7b6c2"><path fill-rule="evenodd" d="M8 0a8 8 0 1 1 0 16A8 8 0 0 1 8 0zM7 3.1v1.8h2V3.1zM6.2 6.2v1h.8v4.8h-.9v1h3.8v-1H9V6.2z"/></svg></div>
<div class="select"></div>
<div class="abs" style="left:983px;top:467px">json</div>
<div class="ico" style="left:1220px;top:468px"><svg width="16" height="16" viewBox="0 0 16 16" fill="#8192a0"><path d="M12.3 6H3.7L8 10.8z"/></svg></div>

<div class="pbtn" style="left:973px;top:506px;width:55px;height:30px;background:rgba(19,124,189,.5)"></div>
<div class="abs" style="left:983px;top:512px;color:rgba(190,205,215,.45)">Apply</div>

<div class="pbtn" style="left:973px;top:551px;width:154px;height:30px;background:#394b59;background-image:linear-gradient(to bottom,rgba(255,255,255,.05),rgba(255,255,255,0));box-shadow:0 0 0 1px rgba(16,22,26,.4)"></div>
<div class="abs" style="left:983px;top:557px">Add column flattening</div>
<div class="ico" style="left:1134px;top:558px"><svg width="16" height="16" viewBox="0 0 16 16" fill="#a7b6c2"><path fill-rule="evenodd" d="M8 0a8 8 0 1 1 0 16A8 8 0 0 1 8 0zM7 3.1v1.8h2V3.1zM6.2 6.2v1h.8v4.8h-.9v1h3.8v-1H9V6.2z"/></svg></div>

<div class="pbtn" style="left:1100px;top:700px;width:143px;height:30px;background:#137cbd;background-image:linear-gradient(to bottom,rgba(255,255,255,.1),rgba(255,255,255,0));box-shadow:0 0 0 1px rgba(16,22,26,.4)"></div>
<div class="abs" style="left:1110px;top:706px;color:#fff;transform:scaleX(0.966);transform-origin:0 0">Next: Parse time</div>
<div class="ico" style="left:1217px;top:707px"><svg width="16" height="16" viewBox="0 0 16 16" fill="#fff"><path d="M14.7 7.3l-5-5a1 1 0 0 0-1.4 1.4L11.6 7H2a1 1 0 0 0 0 2h9.6l-3.3 3.3a1 1 0 0 0 1.4 1.4l5-5a1 1 0 0 0 0-1.4z"/></svg></div>
</body></html>
